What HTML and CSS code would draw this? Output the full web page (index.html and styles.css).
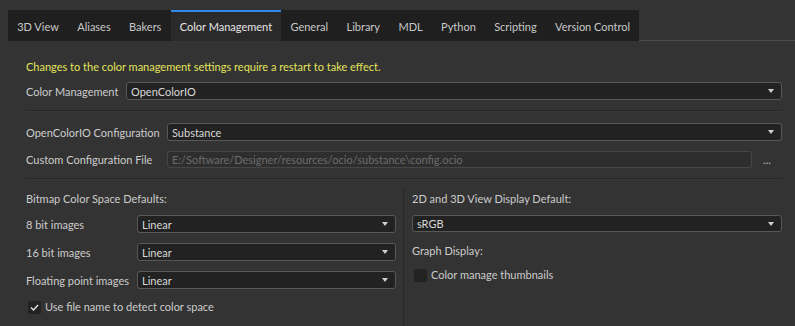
FILE: index.html
```html
<!DOCTYPE html>
<html lang="en">

<head>
    <meta charset="UTF-8">
    <title>Preferences - Color Management</title>
    <link rel="stylesheet" href="styles.css">
</head>

<body>
    <div class="tabbar">
        <div class="tabs">
            <div class="tab">3D View</div>
            <div class="tab">Aliases</div>
            <div class="tab">Bakers</div>
            <div class="tab active">Color Management</div>
            <div class="tab">General</div>
            <div class="tab">Library</div>
            <div class="tab">MDL</div>
            <div class="tab">Python</div>
            <div class="tab">Scripting</div>
            <div class="tab">Version Control</div>
        </div>
        <div class="tab-rest"></div>
    </div>

    <div class="page">
        <p class="notice">Changes to the color management settings require a restart to take effect.</p>

        <div class="row row-cm">
            <label>Color Management</label>
            <div class="combo"><span>OpenColorIO</span><i class="arrow"></i></div>
        </div>

        <div class="sep"></div>

        <div class="row row-ocio">
            <label>OpenColorIO Configuration</label>
            <div class="combo"><span>Substance</span><i class="arrow"></i></div>
        </div>
        <div class="row row-file">
            <label>Custom Configuration File</label>
            <div class="path">E:/Software/Designer/resources/ocio/substance\config.ocio</div>
            <span class="browse">...</span>
        </div>

        <div class="sep"></div>

        <div class="columns">
            <div class="col col-left">
                <div class="heading">Bitmap Color Space Defaults:</div>
                <div class="row">
                    <label>8 bit images</label>
                    <div class="combo"><span>Linear</span><i class="arrow"></i></div>
                </div>
                <div class="row">
                    <label>16 bit images</label>
                    <div class="combo"><span>Linear</span><i class="arrow"></i></div>
                </div>
                <div class="row">
                    <label>Floating point images</label>
                    <div class="combo"><span>Linear</span><i class="arrow"></i></div>
                </div>
                <div class="check check-file">
                    <span class="box checked">
                        <svg width="11" height="11" viewBox="0 0 11 11"><path d="M2 5.5 L4.5 8 L9 3" fill="none" stroke="#e6e6e6" stroke-width="1.4"/></svg>
                    </span>
                    Use file name to detect color space
                </div>
            </div>
            <div class="divider"></div>
            <div class="col col-right">
                <div class="heading">2D and 3D View Display Default:</div>
                <div class="combo"><span>sRGB</span><i class="arrow"></i></div>
                <div class="heading heading-graph">Graph Display:</div>
                <div class="check check-thumbs">
                    <span class="box"></span>
                    Color manage thumbnails
                </div>
            </div>
        </div>
    </div>
</body>

</html>
```

FILE: styles.css
```css
/* Basic Style */
body {
    margin: 0;
    background: #333333;
    color: #cccccc;
    font-family: Lato, sans-serif;
    font-size: 11px;
    overflow: hidden;
}

/* Tabs */
.tabbar {
    display: flex;
    margin-top: 10px;
    padding-left: 8px;
}

.tabs {
    display: flex;
    background: #1f1f1f;
    height: 31px;
}

.tab {
    padding: 0 9.2px;
    color: #c8c8c8;
    border-top: 2px solid transparent;
    line-height: 29px;
    white-space: nowrap;
}

.tab.active {
    background: #2a2a2a;
    border-top-color: #2c8be6;
    color: #e6e6e6;
}

.tab-rest {
    flex: 1;
    border-bottom: 1px solid #4a4a4a;
}

/* Page */
.page {
    padding: 18px 13px 0 26px;
}

.notice {
    margin: 0;
    line-height: 16px;
    color: #e4e45c;
}

.row {
    display: flex;
    align-items: center;
    height: 18px;
}

.row label {
    flex: none;
    white-space: nowrap;
}

.row-cm {
    margin-top: 7px;
}

.row-cm label {
    width: 100px;
}

.row-ocio {
    margin-top: 11px;
}

.row-ocio label,
.row-file label {
    width: 141px;
}

.row-file {
    margin-top: 10px;
    height: 17px;
}

.combo {
    flex: 1;
    display: flex;
    align-items: center;
    justify-content: space-between;
    height: 16px;
    padding: 0 7px 0 4px;
    background: #222222;
    border: 1px solid #585858;
    border-radius: 3px;
    color: #d8d8d8;
}

.arrow {
    width: 0;
    height: 0;
    border-left: 3px solid transparent;
    border-right: 3px solid transparent;
    border-top: 4px solid #d0d0d0;
}

.path {
    flex: 1;
    height: 15px;
    line-height: 15px;
    padding: 0 4px;
    background: #2e2e2e;
    border: 1px solid #464646;
    border-radius: 3px;
    color: #6c6c6c;
    white-space: nowrap;
    overflow: hidden;
}

.browse {
    width: 30px;
    text-align: center;
    color: #bbbbbb;
}

.sep {
    margin-top: 10px;
    border-top: 1px solid #262626;
    border-bottom: 1px solid #3a3a3a;
}

/* Columns */
.columns {
    display: flex;
}

.col-left {
    width: 370px;
}

.col-left .row {
    margin-bottom: 10px;
}

.col-left .row label {
    width: 111px;
}

.divider {
    width: 1px;
    margin: 8px 7px 0 7px;
    background: #262626;
    height: 140px;
}

.col-right {
    flex: 1;
    padding-left: 1px;
}

.heading {
    margin: 11px 0 8px;
    line-height: 16px;
    white-space: nowrap;
}

.heading-graph {
    margin: 11px 0 8px;
}

.col-right .combo {
    height: 15px;
}

.check {
    display: flex;
    align-items: center;
    gap: 4px;
    line-height: 16px;
    padding-left: 2px;
    white-space: nowrap;
}

.check-file {
    margin-top: 2px;
}

.check-thumbs {
    margin-top: 2px;
}

.box {
    width: 13px;
    height: 13px;
    background: #232323;
    border-radius: 2px;
    display: flex;
    align-items: center;
    justify-content: center;
}
```
